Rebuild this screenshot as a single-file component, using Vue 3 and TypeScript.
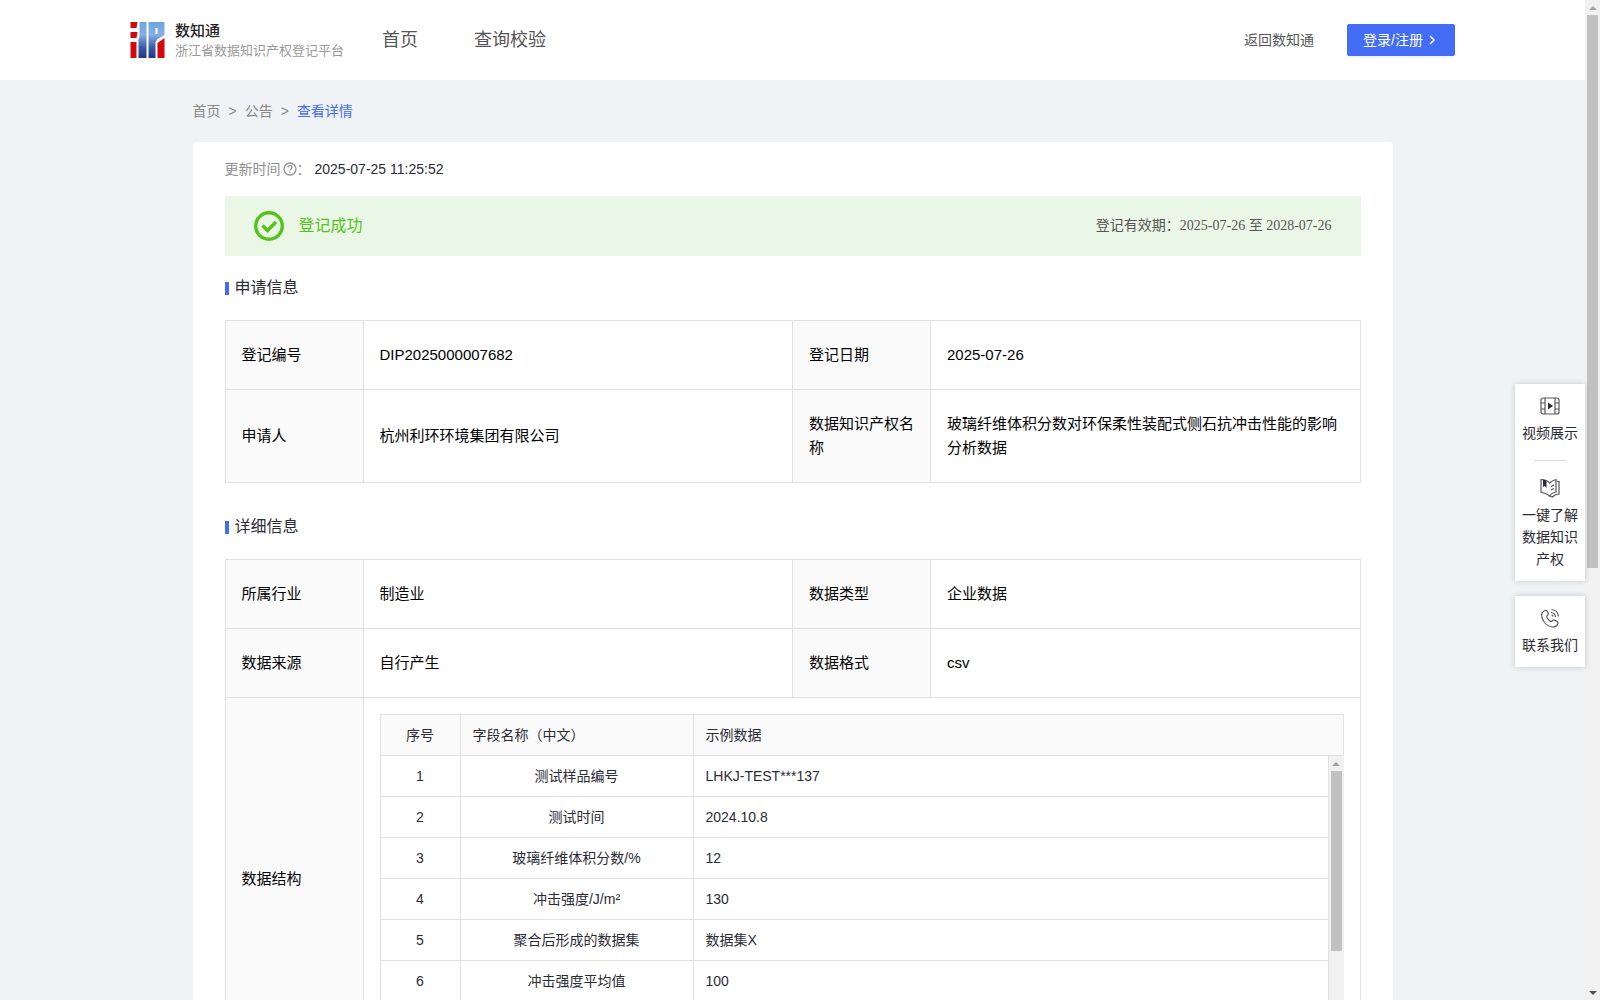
<script setup lang="ts">
interface Field {
  label: string
  value: string
}

interface Column {
  no: number
  name: string
  sample: string
}

const applyRows: Field[][] = [
  [
    { label: '登记编号', value: 'DIP2025000007682' },
    { label: '登记日期', value: '2025-07-26' },
  ],
  [
    { label: '申请人', value: '杭州利环环境集团有限公司' },
    { label: '数据知识产权名称', value: '玻璃纤维体积分数对环保柔性装配式侧石抗冲击性能的影响分析数据' },
  ],
]

const detailRows: Field[][] = [
  [
    { label: '所属行业', value: '制造业' },
    { label: '数据类型', value: '企业数据' },
  ],
  [
    { label: '数据来源', value: '自行产生' },
    { label: '数据格式', value: 'csv' },
  ],
]

const columns: Column[] = [
  { no: 1, name: '测试样品编号', sample: 'LHKJ-TEST***137' },
  { no: 2, name: '测试时间', sample: '2024.10.8' },
  { no: 3, name: '玻璃纤维体积分数/%', sample: '12' },
  { no: 4, name: '冲击强度/J/m²', sample: '130' },
  { no: 5, name: '聚合后形成的数据集', sample: '数据集X' },
  { no: 6, name: '冲击强度平均值', sample: '100' },
]
</script>

<template>
  <div class="shell" lang="zh-CN">
    <div class="page">
      <header class="topbar">
        <a class="brand" href="#">
          <svg class="logo" viewBox="0 0 34 36" aria-hidden="true">
            <defs>
              <linearGradient id="logoBlue" gradientUnits="userSpaceOnUse" x1="0" y1="0" x2="0" y2="36">
                <stop offset="0" stop-color="#6fa3de" />
                <stop offset="0.35" stop-color="#86b1e3" />
                <stop offset="0.7" stop-color="#3a5ba8" />
                <stop offset="1" stop-color="#22357f" />
              </linearGradient>
            </defs>
            <path d="M0 0h7l-1 6H0z" fill="#d4060e" />
            <path d="M0 10h7l-1 6H0z" fill="#d4060e" />
            <path d="M0 20h6v16H0z" fill="#d4060e" />
            <path d="M9 0h7v36H8V18l1-4z" fill="url(#logoBlue)" />
            <path d="M18 0h16v13l-7 4-2 3v16h-7z" fill="url(#logoBlue)" />
            <path d="M25 6h2v6h-2z" fill="#fff" />
            <path d="M34 16v20h-7V21z" fill="#d4060e" />
          </svg>
          <span class="brand-text">
            <strong>数知通</strong>
            <small>浙江省数据知识产权登记平台</small>
          </span>
        </a>
        <nav class="nav">
          <a href="#">首页</a>
          <a href="#">查询校验</a>
        </nav>
        <a class="back" href="#">返回数知通</a>
        <button class="login" type="button">
          登录/注册
          <svg viewBox="0 0 8 10" aria-hidden="true"><path d="M2 1l4 4-4 4" /></svg>
        </button>
      </header>

      <main class="content">
        <nav class="crumbs">
          <a href="#">首页</a><span>&gt;</span><a href="#">公告</a><span>&gt;</span><a class="current" href="#">查看详情</a>
        </nav>

        <article class="card">
          <p class="updated">
            <span>更新时间</span>
            <svg viewBox="0 0 14 14" aria-hidden="true">
              <circle cx="7" cy="7" r="6" />
              <path d="M5 5.6c0-2.6 4-2.5 4-.1 0 1.5-2 1.5-2 3M7 9.6v1.2" />
            </svg>
            <span class="colon">：</span>
            <time>2025-07-25 11:25:52</time>
          </p>

          <section class="banner">
            <svg viewBox="0 0 30 30" aria-hidden="true">
              <circle cx="15" cy="15" r="13.3" />
              <path d="M8.5 14.5l5 5 8.5-8.5" />
            </svg>
            <span class="status">登记成功</span>
            <span class="period">登记有效期：2025-07-26 至 2028-07-26</span>
          </section>

          <h2 class="title">申请信息</h2>
          <table class="info">
            <colgroup><col class="key" /><col /><col class="key" /><col /></colgroup>
            <tbody>
              <tr v-for="(row, i) in applyRows" :key="i">
                <template v-for="f in row" :key="f.label">
                  <th scope="row">{{ f.label }}</th>
                  <td>{{ f.value }}</td>
                </template>
              </tr>
            </tbody>
          </table>

          <h2 class="title later">详细信息</h2>
          <table class="info">
            <colgroup><col class="key" /><col /><col class="key" /><col /></colgroup>
            <tbody>
              <tr v-for="(row, i) in detailRows" :key="i">
                <template v-for="f in row" :key="f.label">
                  <th scope="row">{{ f.label }}</th>
                  <td>{{ f.value }}</td>
                </template>
              </tr>
              <tr>
                <th scope="row">数据结构</th>
                <td class="nested" colspan="3">
                  <table class="grid head">
                    <colgroup><col class="no" /><col class="name" /><col /></colgroup>
                    <thead>
                      <tr>
                        <th scope="col" class="mid">序号</th>
                        <th scope="col">字段名称（中文）</th>
                        <th scope="col">示例数据</th>
                      </tr>
                    </thead>
                  </table>
                  <div class="grid-body">
                    <table class="grid">
                      <colgroup><col class="no" /><col class="name" /><col /></colgroup>
                      <tbody>
                        <tr v-for="c in columns" :key="c.no">
                          <td class="mid">{{ c.no }}</td>
                          <td class="mid">{{ c.name }}</td>
                          <td>{{ c.sample }}</td>
                        </tr>
                      </tbody>
                    </table>
                    <div class="bar" aria-hidden="true">
                      <i class="arrow up"></i>
                      <div class="track"><div class="thumb inner"></div></div>
                      <i class="arrow down"></i>
                    </div>
                  </div>
                </td>
              </tr>
            </tbody>
          </table>
        </article>
      </main>
    </div>

    <aside class="float">
      <div class="float-box">
        <a href="#">
          <svg viewBox="0 0 20 20" aria-hidden="true">
            <rect x="1" y="2" width="18" height="16" rx="2" />
            <path d="M5 2v16M15 2v16M1 7h4M1 13h4M15 7h4M15 13h4" />
            <path class="solid" d="M8 6.5l5 3.5-5 3.5z" />
          </svg>
          视频展示
        </a>
        <hr />
        <a href="#">
          <svg viewBox="0 0 20 20" aria-hidden="true">
            <path d="M1 1.500c3.500 0 6.500 1 8.500 3.500C11 3.500 13 2.200 16 1.500V14c-2.500.5-5 1.800-6.500 4-2-2-5-3-8.500-3.500z" />
            <path d="M17 3.500h2V16c-2.500 0-5 1.200-6.500 3l-3-1" />
            <path d="M11 8.500l3-1.500M11 12l3-1.500" />
            <path class="solid" d="M3 1.500l3.500 1V10L4.800 8 3 9z" />
          </svg>
          一键了解数据知识产权
        </a>
      </div>
      <div class="float-box">
        <a href="#">
          <svg viewBox="0 0 20 20" aria-hidden="true">
            <path d="M5 2.500c-3 1-4 4-3 7 1.500 5 5.500 9 10 9.500 3 .2 5-1 6-3.500.3-1-.2-1.500-1-2l-2.500-1.500c-1-.6-1.700-.2-2.500 1-.7.8-1.500.5-2.500-.3-1.500-1.200-2.500-2.700-2.800-4-.2-.8.3-1.200 1-1.700.8-.6.9-1.200.5-2L7 3c-.4-.7-1.200-.8-2-.5z" />
            <path d="M11 4.500c2.500.2 4.300 2 4.500 4.500M11.500 1.500c4 .3 6.700 3 7 7M11.500 7c.9.1 1.400.6 1.500 1.500" />
          </svg>
          联系我们
        </a>
      </div>
    </aside>

    <div class="bar" aria-hidden="true">
      <i class="arrow up"></i>
      <div class="track"><div class="thumb outer"></div></div>
      <i class="arrow down active"></i>
    </div>
  </div>
</template>

<style>
body {
  margin: 0;
}
</style>

<style scoped>
.shell {
  position: relative;
  display: flex;
  height: 100vh;
  overflow: hidden;
  background: #eff3f6;
  color: #2b2b35;
  font: 14px/22px "Liberation Sans", "Noto Sans CJK SC", sans-serif;
}

.shell * {
  box-sizing: border-box;
}

a {
  color: inherit;
  text-decoration: none;
}

.page {
  flex: 1;
  min-width: 0;
  overflow: hidden;
}

.topbar {
  display: flex;
  align-items: center;
  height: 80px;
  padding: 0 130px;
  background: #fff;
}

.brand {
  display: flex;
  align-items: center;
  gap: 10px;
  width: 252px;
}

.logo {
  flex: none;
  width: 35px;
  height: 36px;
}

.brand-text {
  display: flex;
  flex-direction: column;
  font-family: "Noto Sans CJK SC", sans-serif;
  white-space: nowrap;
}

.brand-text strong {
  color: #222;
  font-size: 15px;
  font-weight: 500;
  line-height: 20px;
}

.brand-text small {
  color: #999;
  font-size: 13px;
  line-height: 20px;
}

.nav {
  display: flex;
  flex: 1;
  gap: 56px;
  color: #555;
  font-size: 18px;
}

.back {
  margin-right: 33px;
  color: #555;
}

.login {
  display: flex;
  align-items: center;
  gap: 5px;
  width: 108px;
  height: 32px;
  padding: 0 16px;
  border: 0;
  border-radius: 2px;
  background: #446df6;
  box-shadow: 0 2px 2px rgba(0, 0, 0, 0.05);
  color: #fff;
  font: inherit;
  white-space: nowrap;
}

.login svg {
  width: 8px;
  height: 10px;
  fill: none;
  stroke: #fff;
  stroke-width: 1.5;
}

.content {
  max-width: 1200px;
  margin: 0 auto;
}

.crumbs {
  display: flex;
  gap: 8px;
  padding: 20px 0;
  color: #888;
}

.crumbs .current {
  color: #446df6;
}

.card {
  padding: 16px 32px 32px;
  border-radius: 4px 4px 0 0;
  background: #fff;
}

.updated {
  display: flex;
  align-items: center;
  margin: 0 0 16px;
  color: #909090;
}

.updated svg {
  width: 14px;
  height: 14px;
  margin-left: 2px;
  fill: none;
  stroke: #909090;
  stroke-width: 1.3;
}

.updated .colon {
  width: 18px;
}

.updated time {
  color: #2b2b35;
}

.banner {
  display: flex;
  align-items: center;
  height: 60px;
  padding: 0 29px;
  background: #ebf7e6;
}

.banner svg {
  width: 30px;
  height: 30px;
  fill: none;
  stroke: #52c41a;
  stroke-width: 3.4;
}

.status {
  flex: 1;
  margin-left: 15px;
  color: #52c41a;
  font-size: 16px;
}

.period {
  color: #555;
  font-family: "Liberation Serif", "Noto Sans CJK SC", serif;
}

.title {
  display: flex;
  align-items: center;
  gap: 6px;
  margin: 20px 0;
  font-size: 16px;
  font-weight: 400;
  line-height: 24px;
}

.title::before {
  width: 4px;
  height: 13px;
  background: #446df6;
  content: "";
}

.title.later {
  margin-top: 32px;
}

table {
  width: 100%;
  border-collapse: collapse;
  table-layout: fixed;
}

th,
td {
  border: 1px solid #e1e1e1;
  font-weight: 400;
  text-align: left;
}

th {
  background: #fafafa;
}

.info {
  color: #000;
  font-size: 15px;
  line-height: 24px;
}

.info th,
.info td {
  padding: 22px 16px;
}

.key {
  width: 138px;
}

.info .nested {
  padding: 16px;
}

.grid {
  color: #2b2b35;
  font-size: 14px;
  line-height: 22px;
}

.info .grid th,
.info .grid td {
  padding: 9px 12px;
}

.grid .no {
  width: 80px;
}

.grid .name {
  width: 233px;
}

.info .grid .mid {
  text-align: center;
}

.grid-body {
  display: flex;
  height: 287px;
  overflow: hidden;
}

.grid-body .grid {
  flex: 1;
  height: max-content;
}

.grid-body tr:first-child td {
  border-top: 0;
}

.bar {
  display: flex;
  flex: none;
  flex-direction: column;
  align-items: center;
  width: 15px;
  background: #f1f1f1;
}

.track {
  flex: 1;
  width: 11px;
}

.thumb {
  background: #c1c1c1;
}

.thumb.outer {
  height: 57%;
}

.thumb.inner {
  height: 70%;
}

.arrow {
  display: flex;
  align-items: center;
  justify-content: center;
  height: 15px;
  color: #a3a3a3;
}

.arrow.active {
  color: #505050;
}

.arrow::before {
  border: 4px solid transparent;
  border-top-width: 0;
  border-bottom: 4px solid currentColor;
  content: "";
}

.arrow.down::before {
  border-top: 4px solid currentColor;
  border-bottom-width: 0;
}

.float {
  position: absolute;
  top: 384px;
  right: 15px;
  display: flex;
  flex-direction: column;
  gap: 15px;
  width: 70px;
  text-align: center;
}

.float-box {
  padding: 12px 7px 11px;
  background: #fff;
  box-shadow: 0 0 6px rgba(0, 0, 0, 0.18);
}

.float-box a {
  display: flex;
  flex-direction: column;
  align-items: center;
  gap: 6px;
}

.float-box svg {
  width: 20px;
  height: 20px;
  fill: none;
  stroke: #55555f;
  stroke-width: 1.2;
}

.float-box .solid {
  fill: #2b2b35;
  stroke: none;
}

.float-box hr {
  width: 32px;
  height: 1px;
  margin: 16px auto 17px;
  border: 0;
  background: #ddd;
}
</style>
